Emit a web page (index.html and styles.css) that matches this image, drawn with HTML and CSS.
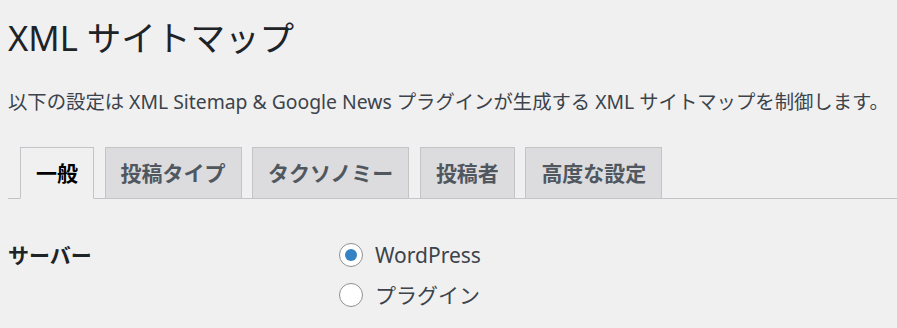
FILE: index.html
```html
<!DOCTYPE html>
<html lang="ja">
<head>
    <meta charset="UTF-8">
    <title>XML サイトマップ</title>
    <link rel="stylesheet" href="styles.css">
</head>
<body>
<div class="wrap">
    <h1>XML サイトマップ</h1>
    <p class="intro">以下の設定は XML Sitemap &amp; Google News プラグインが生成する XML サイトマップを制御します。</p>

    <nav class="nav-tab-wrapper">
        <a class="nav-tab nav-tab-active" href="#">一般</a>
        <a class="nav-tab" href="#">投稿タイプ</a>
        <a class="nav-tab" href="#">タクソノミー</a>
        <a class="nav-tab" href="#">投稿者</a>
        <a class="nav-tab" href="#">高度な設定</a>
    </nav>

    <div class="form-row">
        <div class="form-label">サーバー</div>
        <div class="form-field">
            <label class="radio-row"><input type="radio" name="server" checked> WordPress</label>
            <label class="radio-row"><input type="radio" name="server"> プラグイン</label>
        </div>
    </div>
</div>
</body>
</html>
```

FILE: styles.css
```css
body {
    margin: 0;
    background: #f0f0f1;
    color: #3c434a;
    font-family: "Noto Sans", "Noto Sans CJK JP", sans-serif;
}

.wrap {
    padding: 16px 0 0 8px;
}

h1 {
    margin: 0;
    font-size: 34.6px;
    font-weight: 400;
    line-height: 44px;
    color: #1d2327;
}

.intro {
    margin: 27px 0 0;
    font-size: 19.35px;
    line-height: 29px;
}

/* tabs */
.nav-tab-wrapper {
    display: flex;
    gap: 10.5px;
    margin-top: 31px;
    padding-left: 12px;
    border-bottom: 1px solid #c3c4c7;
}

.nav-tab {
    display: block;
    margin-bottom: -1px;
    padding: 7px 15px;
    font-size: 21px;
    font-weight: 700;
    line-height: 36px;
    color: #50575e;
    text-decoration: none;
    background: #dcdcde;
    border: 1px solid #c3c4c7;
}

.nav-tab-active {
    background: #f0f0f1;
    border-bottom-color: #f0f0f1;
    color: #000;
}

/* settings row */
.form-row {
    display: flex;
    margin-top: 41px;
}

.form-label {
    width: 331px;
    font-size: 21px;
    font-weight: 700;
    line-height: 30px;
    color: #1d2327;
}

.form-field {
    display: flex;
    flex-direction: column;
    gap: 10px;
}

.radio-row {
    display: flex;
    align-items: center;
    gap: 12px;
    font-size: 21px;
    line-height: 30px;
}

.radio-row input {
    appearance: none;
    margin: 0;
    width: 24px;
    height: 24px;
    border: 1.5px solid #8c8f94;
    border-radius: 50%;
    background: #fff;
    display: grid;
    place-items: center;
}

.radio-row input:checked::before {
    content: "";
    width: 12px;
    height: 12px;
    border-radius: 50%;
    background: #3582c4;
}
```
